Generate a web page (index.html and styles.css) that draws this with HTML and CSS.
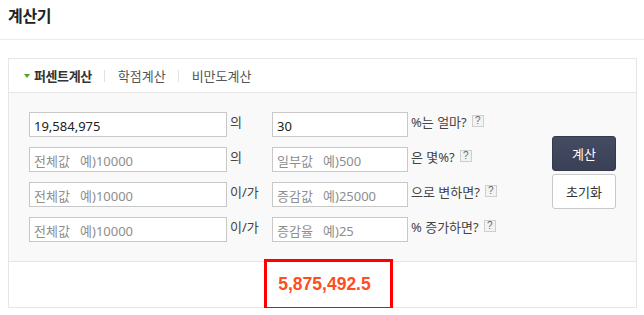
FILE: index.html
```html
<!DOCTYPE html>
<html lang="ko">
<head>
<meta charset="utf-8">
<title>계산기</title>
<link rel="stylesheet" href="styles.css">
</head>
<body>
<div class="header"><h1 class="title">계산기</h1></div>
<div class="calc">
  <div class="tabs">
    <span class="tab active"><span class="arrow"></span>퍼센트계산</span>
    <span class="sep"></span>
    <span class="tab">학점계산</span>
    <span class="sep"></span>
    <span class="tab">비만도계산</span>
  </div>
  <div class="form">
    <div class="rows">
      <input class="in1" type="text" value="19,584,975">
      <span class="lab">의</span>
      <input class="in2" type="text" value="30">
      <span class="desc">%는 얼마? <span class="help">?</span></span>

      <input class="in1" type="text" placeholder="전체값   예)10000">
      <span class="lab">의</span>
      <input class="in2" type="text" placeholder="일부값   예)500">
      <span class="desc">은 몇%? <span class="help">?</span></span>

      <input class="in1" type="text" placeholder="전체값   예)10000">
      <span class="lab">이/가</span>
      <input class="in2" type="text" placeholder="증감값   예)25000">
      <span class="desc">으로 변하면? <span class="help">?</span></span>

      <input class="in1" type="text" placeholder="전체값   예)10000">
      <span class="lab">이/가</span>
      <input class="in2" type="text" placeholder="증감율   예)25">
      <span class="desc">% 증가하면? <span class="help">?</span></span>
    </div>
    <div class="buttons">
      <button class="btn primary" type="button">계산</button>
      <button class="btn" type="button">초기화</button>
    </div>
  </div>
  <div class="result"><span class="value">5,875,492.5</span></div>
</div>
</body>
</html>
```
FILE: styles.css
```css
* { box-sizing: border-box; }
html, body { margin: 0; padding: 0; background: #fff; }
body {
  font-family: "Noto Sans", "Noto Sans CJK KR", sans-serif;
  font-size: 13px;
  color: #333;
  width: 644px;
}
.header {
  height: 40px;
  border-bottom: 1px solid #ebebeb;
  padding: 0 8px;
}
.title {
  margin: 0;
  font-family: "Noto Sans CJK KR", sans-serif;
  font-size: 16px;
  font-weight: 700;
  line-height: 30px;
  color: #222;
  letter-spacing: -0.3px;
}
.calc {
  margin: 18px 7px 0 8px;
  border: 1px solid #e6e6e6;
}
.tabs {
  height: 34px;
  border-bottom: 1px solid #e6e6e6;
  display: flex;
  align-items: center;
  padding-left: 15px;
  font-family: "Noto Sans CJK KR", sans-serif;
}
.tab {
  color: #555;
  display: flex;
  align-items: center;
}
.tab.active { font-weight: 700; color: #333; letter-spacing: -0.4px; }
.arrow {
  width: 0; height: 0;
  border-left: 3px solid transparent;
  border-right: 3px solid transparent;
  border-top: 4px solid #4caa1c;
  margin-right: 4px;
}
.sep {
  width: 1px;
  height: 12px;
  background: #e2e2e2;
  margin: 0 13px 0 12px;
}
.form {
  background: #f9f9f9;
  padding: 19px 20px 19px 20px;
  display: flex;
  justify-content: space-between;
  border-bottom: 1px solid #e6e6e6;
}
.rows {
  display: grid;
  grid-template-columns: 198px 45px 136px auto;
  row-gap: 10px;
  align-items: start;
}
input {
  height: 25px;
  border: 1px solid #c8c8c8;
  background: #fff;
  font-family: "Noto Sans", "Noto Sans CJK KR", sans-serif;
  font-size: 13px;
  color: #222;
  padding: 3px 4px 0 4px;
  margin: 0;
  outline: none;
}
input::placeholder { color: #8e8e8e; }
.lab, .desc {
  line-height: 20px;
  color: #444;
  padding-left: 3px;
}
.desc { display: flex; align-items: center; }
.help {
  display: inline-block;
  width: 12px;
  height: 12px;
  border: 1px solid #cfcfcf;
  background: #f3f3f3;
  font-family: "Liberation Sans", sans-serif;
  font-size: 10px;
  line-height: 10px;
  text-align: center;
  color: #666;
  margin-left: 5px;
  margin-top: -3px;
}
.buttons {
  display: flex;
  flex-direction: column;
  gap: 3px;
  margin-top: 24px;
}
.btn {
  width: 64px;
  height: 35px;
  border: 1px solid #c8c8c8;
  border-radius: 3px;
  background: #fff;
  color: #333;
  font-family: "Noto Sans CJK KR", sans-serif;
  font-size: 13px;
  padding: 0;
}
.btn.primary {
  background: linear-gradient(#454b63, #3a4055);
  border-color: #343a4d;
  color: #fff;
}
.result {
  height: 45px;
  text-align: center;
  line-height: 45px;
}
.value {
  position: relative;
  display: inline-block;
  font-family: "Liberation Sans", Arial, sans-serif;
  font-weight: 700;
  font-size: 17.5px;
  color: #ff4d22;
  margin-left: 4px;
}
.value::after {
  content: "";
  position: absolute;
  left: -14px;
  right: -22px;
  top: -3px;
  bottom: -3px;
  border: 3px solid #ff0000;
}
```
